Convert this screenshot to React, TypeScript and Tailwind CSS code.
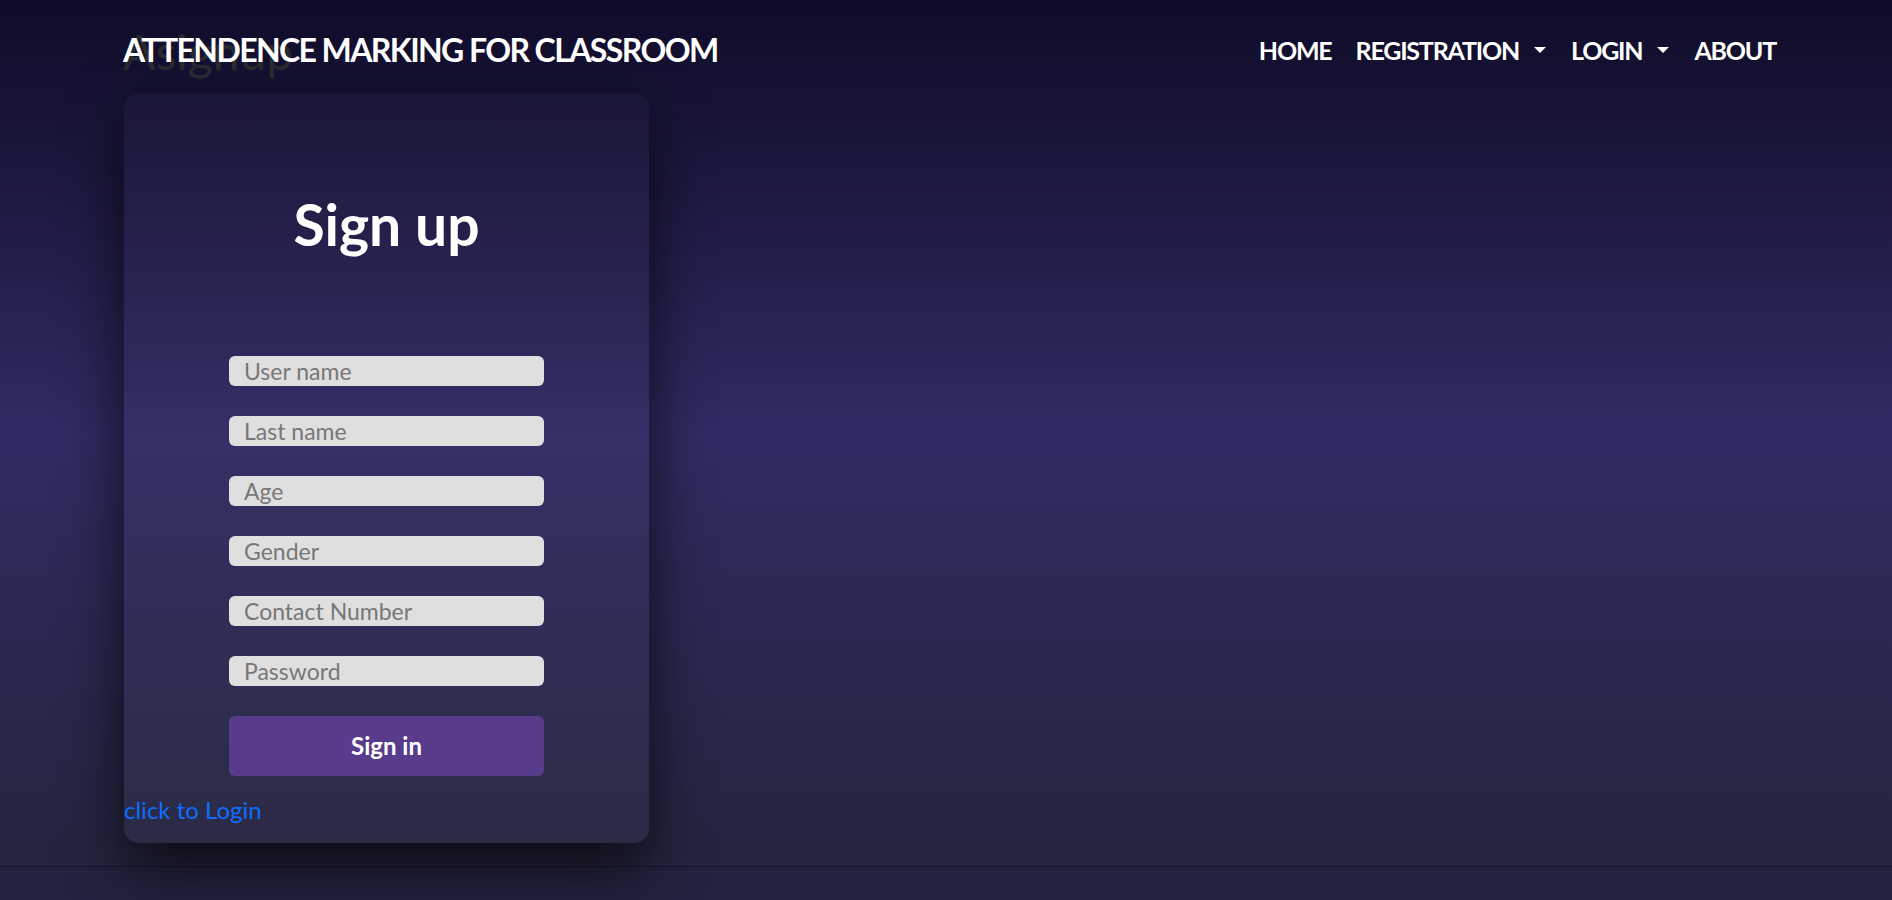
import React from "react";

const font = { fontFamily: "Lato, 'Noto Sans', 'Liberation Sans', sans-serif" };

function Caret() {
  return (
    <span className="ml-[15px] inline-block h-0 w-0 border-x-[6px] border-t-[6px] border-b-0 border-x-transparent border-t-white" />
  );
}

function Field({ placeholder, type = "text" }: { placeholder: string; type?: string }) {
  return (
    <input
      type={type}
      placeholder={placeholder}
      className="block h-[30px] w-[315px] rounded-[6px] bg-[#e0dfe0] pl-[15px] text-[23px] leading-[30px] text-[#333] outline-none placeholder:text-[#777]"
      style={font}
    />
  );
}

export default function App() {
  return (
    <div className="relative min-h-[900px] w-full bg-[#24233f]" style={font}>
      <div className="relative h-[867px] w-full border-b border-white/[0.04] bg-gradient-to-b from-[#0f0c29] via-[#302b63] to-[#24243e]">
        <div className="absolute left-[123px] top-[28px] text-[48px] leading-none text-[#272a2e]">
          Asignup
        </div>
        <nav className="relative flex h-[93px] items-center justify-between pl-[123px] pr-[116px] pt-[7px]">
          <div className="text-[32px] font-bold leading-none tracking-[-1.6px] text-white">
            ATTENDENCE MARKING FOR CLASSROOM
          </div>
          <div className="flex items-center text-[25px] font-bold leading-none tracking-[-1.2px] text-white">
            <span>HOME</span>
            <span className="ml-[24px] flex items-center">
              REGISTRATION
              <Caret />
            </span>
            <span className="ml-[25px] flex items-center">
              LOGIN
              <Caret />
            </span>
            <span className="ml-[25px]">ABOUT</span>
          </div>
        </nav>
        <div className="ml-[124px] flex h-[750px] w-[525px] flex-col rounded-[15px] bg-gradient-to-b from-white/[0.015] to-white/[0.03] shadow-[0_25px_60px_rgba(0,0,0,0.7)]">
          <h2 className="mt-[99px] text-center text-[57px] font-bold leading-[64px] text-white">
            Sign up
          </h2>
          <div className="mt-[100px] flex flex-col items-center gap-[30px]">
            <Field placeholder="User name" />
            <Field placeholder="Last name" />
            <Field placeholder="Age" />
            <Field placeholder="Gender" />
            <Field placeholder="Contact Number" />
            <Field placeholder="Password" type="password" />
            <button className="h-[60px] w-[315px] rounded-[6px] bg-[#583b8a] text-[24px] font-bold text-white">
              Sign in
            </button>
          </div>
          <a className="mt-[19px] text-[24px] leading-[30px] text-[#0d6efd]" href="#">
            click to Login
          </a>
        </div>
      </div>
    </div>
  );
}
